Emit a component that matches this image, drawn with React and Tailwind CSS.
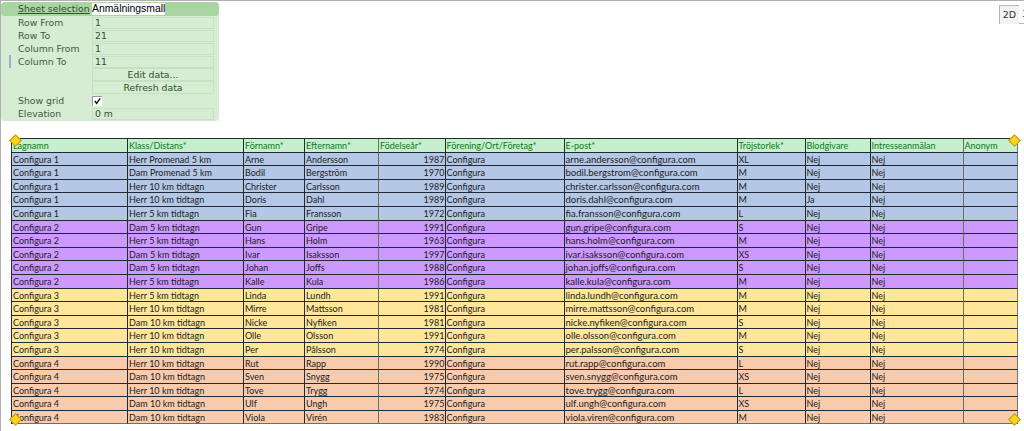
const header = ['Lagnamn', 'Klass/Distans*', 'Förnamn*', 'Efternamn*', 'Födelseår*', 'Förening/Ort/Företag*', 'E-post*', 'Tröjstorlek*', 'Blodgivare', 'Intresseanmälan', 'Anonym'];

const rows = [
  ['Configura 1', 'Herr Promenad 5 km', 'Arne', 'Andersson', '1987', 'arne.andersson@configura.com', 'XL', 'Nej'],
  ['Configura 1', 'Dam Promenad 5 km', 'Bodil', 'Bergström', '1970', 'bodil.bergstrom@configura.com', 'M', 'Nej'],
  ['Configura 1', 'Herr 10 km tidtagn', 'Christer', 'Carlsson', '1989', 'christer.carlsson@configura.com', 'M', 'Nej'],
  ['Configura 1', 'Herr 10 km tidtagn', 'Doris', 'Dahl', '1989', 'doris.dahl@configura.com', 'M', 'Ja'],
  ['Configura 1', 'Herr 5 km tidtagn', 'Fia', 'Fransson', '1972', 'fia.fransson@configura.com', 'L', 'Nej'],
  ['Configura 2', 'Dam 5 km tidtagn', 'Gun', 'Gripe', '1991', 'gun.gripe@configura.com', 'S', 'Nej'],
  ['Configura 2', 'Herr 5 km tidtagn', 'Hans', 'Holm', '1963', 'hans.holm@configura.com', 'M', 'Nej'],
  ['Configura 2', 'Dam 5 km tidtagn', 'Ivar', 'Isaksson', '1997', 'ivar.isaksson@configura.com', 'XS', 'Nej'],
  ['Configura 2', 'Dam 5 km tidtagn', 'Johan', 'Joffs', '1988', 'johan.joffs@configura.com', 'S', 'Nej'],
  ['Configura 2', 'Herr 5 km tidtagn', 'Kalle', 'Kula', '1986', 'kalle.kula@configura.com', 'M', 'Nej'],
  ['Configura 3', 'Herr 5 km tidtagn', 'Linda', 'Lundh', '1991', 'linda.lundh@configura.com', 'M', 'Nej'],
  ['Configura 3', 'Herr 10 km tidtagn', 'Mirre', 'Mattsson', '1981', 'mirre.mattsson@configura.com', 'M', 'Nej'],
  ['Configura 3', 'Dam 10 km tidtagn', 'Nicke', 'Nyfiken', '1981', 'nicke.nyfiken@configura.com', 'S', 'Nej'],
  ['Configura 3', 'Herr 10 km tidtagn', 'Olle', 'Olsson', '1991', 'olle.olsson@configura.com', 'M', 'Nej'],
  ['Configura 3', 'Herr 10 km tidtagn', 'Per', 'Pålsson', '1974', 'per.palsson@configura.com', 'S', 'Nej'],
  ['Configura 4', 'Herr 10 km tidtagn', 'Rut', 'Rapp', '1990', 'rut.rapp@configura.com', 'L', 'Nej'],
  ['Configura 4', 'Dam 10 km tidtagn', 'Sven', 'Snygg', '1975', 'sven.snygg@configura.com', 'XS', 'Nej'],
  ['Configura 4', 'Herr 10 km tidtagn', 'Tove', 'Trygg', '1974', 'tove.trygg@configura.com', 'L', 'Nej'],
  ['Configura 4', 'Dam 10 km tidtagn', 'Ulf', 'Ungh', '1975', 'ulf.ungh@configura.com', 'XS', 'Nej'],
  ['Configura 4', 'Dam 10 km tidtagn', 'Viola', 'Virén', '1983', 'viola.viren@configura.com', 'M', 'Nej'],
];

const groupBg = {
  'Configura 1': 'bg-[#b4c7e7]',
  'Configura 2': 'bg-[#cc99ff]',
  'Configura 3': 'bg-[#ffe699]',
  'Configura 4': 'bg-[#f8cbad]',
};

// these column edges come out grey in the reference
const colEdge = ['', '', '', 'border-r-[#6e6e62]', '', '', '', '', '', 'border-r-[#6e6e62]', 'border-r-[#77776c]'];

const Field = ({ label, value }) => (
  <div className="flex h-[13px] items-center">
    <span className="w-[74px] shrink-0 text-[#3f5a3f]">{label}</span>
    <span className="h-[12px] w-[122px] border border-[#c6e0c2] pl-[2px] leading-[10px] text-[#2f4f2f]">{value}</span>
  </div>
);

const ActionButton = ({ children }) => (
  <div className="ml-[74px] h-[13px] w-[122px] border border-[#c6e0c2] text-center leading-[11px] text-[#2f4f2f]">{children}</div>
);

const Cell = ({ children, className = '' }) => (
  <div className={`overflow-hidden whitespace-nowrap border-r border-b border-[#1f2a33] pl-[1px] leading-[13px] ${className}`}>{children}</div>
);

const Handle = ({ className }) => (
  <div className={`absolute h-[9px] w-[9px] rotate-45 border border-[#b89a10] bg-[#ffd21f] ${className}`} />
);

export default function App() {
  return (
    <div className="relative h-[431px] w-[1024px] overflow-hidden border-t border-l border-[#b0b0b0] bg-white">
      <div className="absolute top-[4px] left-[998px] flex font-['DejaVu_Sans',sans-serif] text-[9.5px] text-[#333]">
        <div className="flex h-[19px] w-[20px] items-center justify-center border-t border-l border-[#b5b5b5] bg-[#f2f2f2]">2D</div>
        <div className="flex h-[19px] w-[20px] items-center justify-center border-b border-[#b5b5b5] bg-white">3D</div>
      </div>

      {/* Sheet panel */}
      <div className="mt-[1px] h-[119px] w-[218px] rounded-[4px] bg-[#d6ecd3] font-['DejaVu_Sans',sans-serif] text-[9.3px]">
        <div className="flex h-[14px] items-center rounded-[4px] bg-[#a8d5a2] pl-[17px]">
          <span className="w-[74px] shrink-0 text-[#2f4f2f] underline">Sheet selection</span>
          <span className="bg-white font-['Liberation_Sans',sans-serif] text-[10.4px] leading-[12px] text-black">Anmälningsmall</span>
        </div>
        <div className="relative pl-[17px]">
          <Field label="Row From" value="1" />
          <Field label="Row To" value="21" />
          <Field label="Column From" value="1" />
          <Field label="Column To" value="11" />
          <div className="absolute top-[39px] left-[8px] h-[13px] w-[2px] bg-[#a3a8d8]" />
          <ActionButton>Edit data...</ActionButton>
          <ActionButton>Refresh data</ActionButton>
          <div className="flex h-[13px] items-center">
            <span className="w-[74px] shrink-0 text-[#3f5a3f]">Show grid</span>
            <span className="flex h-[10px] w-[10px] items-center justify-center border-t border-l border-[#999] bg-white">
              <svg viewBox="0 0 10 10" className="h-[9px] w-[9px]"><path d="M2 4.5 4 7 8 1.5" fill="none" stroke="#111" strokeWidth="1.6" /></svg>
            </span>
          </div>
          <Field label="Elevation" value="0 m" />
        </div>
      </div>

      {/* Spreadsheet */}
      <div className="relative ml-[10px] mt-[17px] w-[1007px]">
        <div className="grid grid-cols-[116px_116px_61px_74px_66.5px_119px_173px_68px_65px_93px_54.5px] auto-rows-[13.6px] border-t border-l border-[#1f2a33] font-['Lato',sans-serif] text-[9px] text-[#1c1c1c]">
          {header.map((h, i) => (
            <Cell key={h} className={`bg-[#c6efce] text-[#0b7a20] ${colEdge[i]}`}>{h}</Cell>
          ))}
          {rows.map((r) => {
            const bg = groupBg[r[0]];
            const values = [r[0], r[1], r[2], r[3], r[4], 'Configura', r[5], r[6], r[7], 'Nej', ''];
            return values.map((v, i) => (
              <Cell
                key={r[2] + i}
                className={`${bg} ${colEdge[i]} ${i === 4 ? 'text-right' : ''} ${i === 6 ? 'text-[9.5px]' : ''} ${r[2] === 'Viola' ? 'border-b-[#6e6e62]' : ''}`}
              >
                {v}
              </Cell>
            ));
          })}
        </div>
        <Handle className="top-[-2px] left-[0px]" />
        <Handle className="top-[-2px] right-[-1px]" />
        <Handle className="bottom-[0px] left-[0px]" />
        <Handle className="right-[-1px] bottom-[0px]" />
      </div>
    </div>
  );
}
